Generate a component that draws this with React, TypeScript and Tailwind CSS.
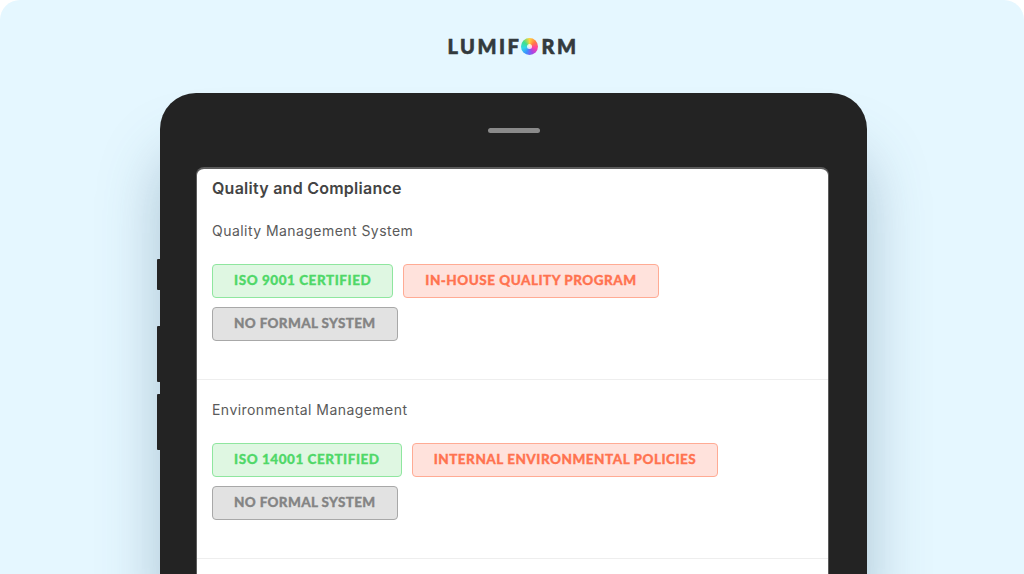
const base = "h-[34px] flex items-center px-[21px] pb-[1px] rounded-[4px] border text-[13.5px] font-black whitespace-nowrap [-webkit-text-stroke:0.3px_currentColor] [font-family:Lato,sans-serif]";
const green = base + " tracking-[0.55px] bg-[#dff7e2] border-[#8fe69f] text-[#4fd868]";
const red = base + " tracking-[0.5px] bg-[#ffe2dc] border-[#ffab94] text-[#ff7350]";
const gray = base + " tracking-[0.35px] bg-[#e2e2e2] border-[#a8a8a8] text-[#848484]";

function Section({ title, a, b }: { title: string; a: string; b: string }) {
  return (
    <section className="h-[179px] border-b border-[#eeeeee] pl-[15px] pr-[15px]">
      <h3 className="pt-[20px] h-[63px] text-[14px] leading-[20px] text-[#5a5a5a] tracking-[0.45px] [font-family:Inter,sans-serif]">{title}</h3>
      <div className="flex flex-wrap gap-x-[10px] gap-y-[9px]">
        <div className={green}>{a}</div>
        <div className={red}>{b}</div>
        <div className={gray}>NO FORMAL SYSTEM</div>
      </div>
    </section>
  );
}

export default function App() {
  return (
    <div className="w-[1024px] h-[574px] bg-white overflow-hidden">
      <div className="h-full rounded-t-[20px] bg-[#e5f7ff] overflow-hidden flex flex-col items-center">
        <div className="h-[93px] w-full flex items-center justify-center pb-[1px] pl-[2px]">
          <div className="flex items-center text-[20px] font-black tracking-[2.5px] text-[#333a3d] [-webkit-text-stroke:0.6px_currentColor] [font-family:Lato,sans-serif]">
            <span>LUMIF</span>
            <span className="w-[17px] h-[17px] mr-[3px] rounded-full bg-[conic-gradient(#ffd23c,#ff7a45,#ff3fa4,#a347e8,#3f8cff,#2fd9e8,#3fe08a,#ffd23c)] flex items-center justify-center">
              <span className="w-[5px] h-[5px] rounded-full bg-white/80" />
            </span>
            <span>RM</span>
          </div>
        </div>
        <div className="relative w-[707px] ml-[3px] flex-1 bg-[#232323] rounded-t-[36px] shadow-[0_60px_60px_rgba(60,100,130,0.35)] flex flex-col items-center">
          <div className="absolute left-[-3px] top-[166px] w-[3px] h-[31px] bg-[#232323] rounded-l-[1px]" />
          <div className="absolute left-[-3px] top-[233px] w-[3px] h-[56px] bg-[#232323] rounded-l-[1px]" />
          <div className="absolute left-[-3px] top-[301px] w-[3px] h-[56px] bg-[#232323] rounded-l-[1px]" />
          <div className="mt-[35px] w-[52px] h-[5px] rounded-full bg-[#8a8a8a]" />
          <div className="mt-[34px] w-[633px] ml-[-2px] flex-1 bg-white rounded-t-[8px] border-t-2 border-x border-[#5c5c5c] overflow-hidden">
            <h2 className="pl-[15px] pt-[9px] h-[32px] text-[16px] leading-[20px] font-semibold tracking-[0.25px] text-[#444444] [font-family:Inter,sans-serif]">Quality and Compliance</h2>
            <Section title="Quality Management System" a="ISO 9001 CERTIFIED" b="IN-HOUSE QUALITY PROGRAM" />
            <Section title="Environmental Management" a="ISO 14001 CERTIFIED" b="INTERNAL ENVIRONMENTAL POLICIES" />
          </div>
        </div>
      </div>
    </div>
  );
}
